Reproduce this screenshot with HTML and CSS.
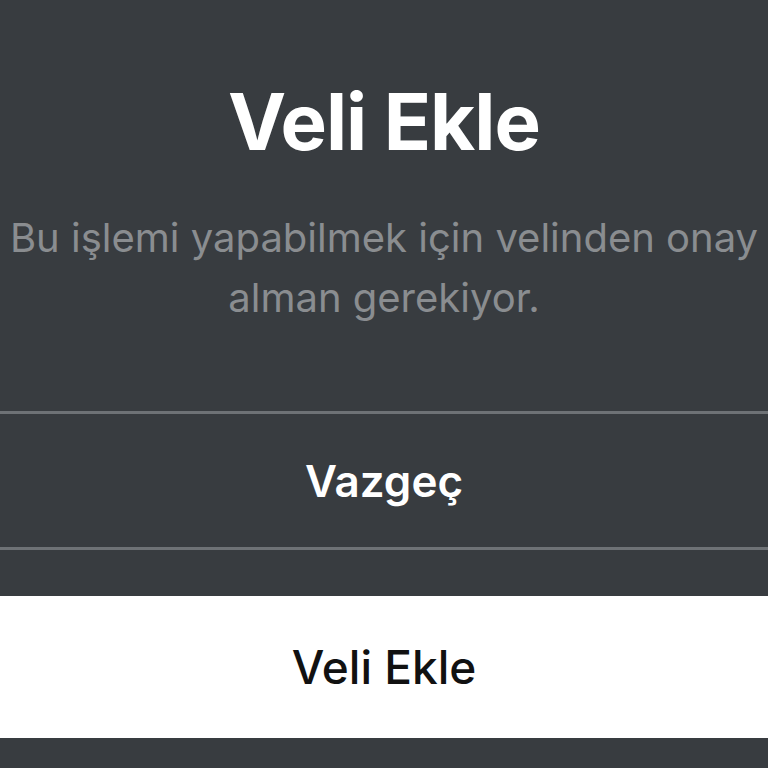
FILE: index.html
```html
<!DOCTYPE html>
<html lang="tr">
<head>
    <meta charset="utf-8">
    <title>Veli Ekle</title>
    <link rel="stylesheet" href="styles.css">
</head>
<body>
    <div class="dialog">
        <div class="dialog-body">
            <h1>Veli Ekle</h1>
            <p class="message">Bu işlemi yapabilmek için velinden onay alman gerekiyor.</p>
        </div>
        <div class="divider"></div>
        <button class="action cancel">Vazgeç</button>
        <div class="divider"></div>
        <div class="spacer"></div>
        <button class="action primary">Veli Ekle</button>
    </div>
</body>
</html>
```

FILE: styles.css
```css
/* CSS styles */

body {
    font-family: Inter, "Noto Sans", sans-serif;
    background-color: #383c40;
    margin: 0;
    padding: 0;
}

.dialog {
    width: 768px;
    height: 768px;
    overflow: hidden;
}

.dialog-body {
    height: 411px;
    text-align: center;
    padding-top: 78px;
    box-sizing: border-box;
}

h1 {
    margin: 0;
    font-size: 78px;
    font-weight: 700;
    line-height: 88px;
    color: #fff;
    letter-spacing: -1px;
}

.message {
    margin: 42px 0 0;
    font-size: 40px;
    line-height: 60px;
    font-weight: 400;
    color: #8a8d90;
    padding: 0 2px;
}

.divider {
    height: 3px;
    background-color: #6e7276;
}

.action {
    display: block;
    width: 100%;
    border: none;
    font-family: inherit;
    cursor: pointer;
}

.cancel {
    height: 133px;
    background-color: transparent;
    color: #fff;
    font-size: 44px;
    font-weight: 600;
}

.spacer {
    height: 46px;
}

.primary {
    height: 142px;
    background-color: #fff;
    color: #111;
    font-size: 46px;
    font-weight: 500;
}
```
